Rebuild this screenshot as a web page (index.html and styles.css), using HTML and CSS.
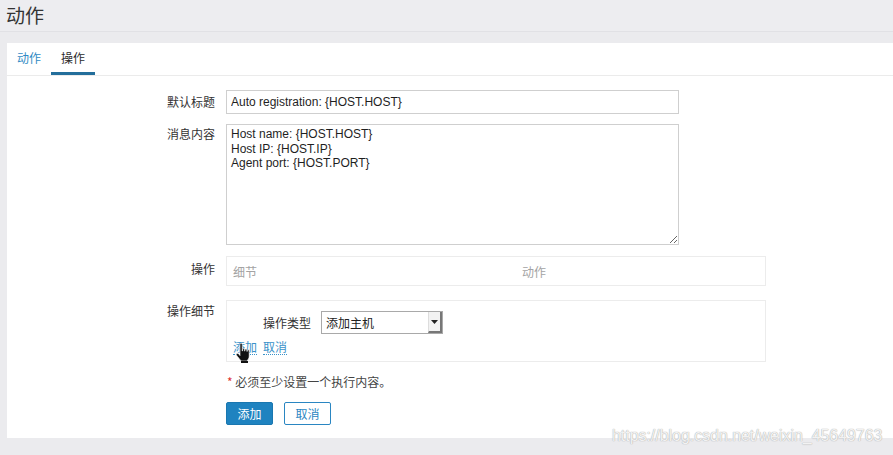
FILE: index.html
```html
<!DOCTYPE html>
<html lang="zh">
<head>
<meta charset="utf-8">
<link rel="stylesheet" href="styles.css">
</head>
<body>
<header class="page-head"><h1>动作</h1></header>
<main class="card">
  <nav class="tabs">
    <a class="tab">动作</a>
    <a class="tab active">操作</a>
  </nav>
  <form class="form">
    <label class="lbl">默认标题</label>
    <div class="ctl"><input class="text-in" type="text" value="Auto registration: {HOST.HOST}"></div>

    <label class="lbl lbl-ta">消息内容</label>
    <div class="ctl"><textarea class="ta">Host name: {HOST.HOST}
Host IP: {HOST.IP}
Agent port: {HOST.PORT}</textarea></div>

    <label class="lbl lbl-op">操作</label>
    <div class="ctl gap1">
      <div class="op-box">
        <span class="col1">细节</span>
        <span class="col2">动作</span>
      </div>
    </div>

    <label class="lbl lbl-det">操作细节</label>
    <div class="ctl gap2">
      <div class="det-box">
        <div class="det-row">
          <span class="det-lbl">操作类型</span>
          <div class="sel"><span>添加主机</span><span class="sel-btn"><svg width="7" height="4" viewBox="0 0 7 4"><path d="M0 0h7L3.5 4z" fill="#222"/></svg></span></div>
        </div>
        <div class="links">
          <a class="lnk">添加</a><a class="lnk">取消</a>
          <svg class="cursor" width="16" height="20" viewBox="0 0 16 20"><path d="M4 1.5c0-.8.5-1.3 1.1-1.3s1.1.5 1.1 1.3V8l.4-.1V6.7c0-.7.5-1.1 1-1.1s1 .4 1 1.1v1.4h.3v-1c0-.7.5-1.1 1-1.1s1 .4 1 1.1v1.3h.3v-.6c0-.6.4-1 1-1s1 .4 1 1V13c0 2.5-1.5 4.2-2.6 5H5.2c-.9-1.2-3.6-4.2-4.5-5.6-.5-.8-.3-1.6.4-1.9.6-.3 1.3 0 1.8.7L4 12.6z" fill="#111" stroke="#fff" stroke-width=".6"/><rect x="5" y="18" width="7" height="2" fill="#111"/></svg>
        </div>
      </div>
    </div>

    <span></span>
    <p class="note"><span class="req">*</span> 必须至少设置一个执行内容。</p>

    <span></span>
    <div class="btns">
      <button type="button" class="btn primary">添加</button>
      <button type="button" class="btn outline">取消</button>
    </div>
  </form>
</main>
<div class="watermark">https://blog.csdn.net/weixin_45649763</div>
</body>
</html>
```

FILE: styles.css
```css
html, body {
  margin: 0;
  padding: 0;
}
body {
  background: #ebebee;
  font-family: "Liberation Sans", "Noto Sans CJK SC", sans-serif;
  font-size: 12px;
  color: #1f2c33;
  width: 893px;
  height: 455px;
  overflow: hidden;
  position: relative;
}
.page-head {
  height: 31px;
  border-bottom: 1px solid #e1e1e5;
  background: #ededf0;
}
.page-head h1 {
  margin: 0;
  padding-left: 6px;
  font-family: "Noto Sans CJK SC", sans-serif;
  font-weight: 400;
  font-size: 19px;
  line-height: 29px;
  color: #333;
}
.card {
  margin: 11px 0 0 7px;
  background: #fff;
  height: 395px;
  box-sizing: border-box;
}
.tabs {
  display: flex;
  height: 32px;
  border-bottom: 1px solid #ebebeb;
}
.tab {
  padding: 0 10px;
  font-family: "Noto Sans CJK SC", sans-serif;
  font-size: 12px;
  line-height: 29px;
  color: #2f8ac4;
  border-bottom: 3px solid transparent;
}
.tab.active {
  color: #2b2b2b;
  border-bottom-color: #236e9b;
}
.form {
  display: grid;
  grid-template-columns: 208px 1fr;
  column-gap: 11px;
  padding-top: 14px;
}
.lbl {
  text-align: right;
  font-family: "Noto Sans CJK SC", sans-serif;
  font-size: 12px;
  color: #333;
  padding-top: 4px;
  line-height: 16px;
}
.lbl-ta { padding-top: 2px; margin-top: 10px; }
.lbl-op { padding-top: 5px; margin-top: 11px; }
.lbl-det { padding-top: 3px; margin-top: 14px; }
.ctl { display: flex; }
.text-in {
  width: 453px;
  height: 24px;
  box-sizing: border-box;
  border: 1px solid #cfcfcf;
  padding: 0 4px;
  font-family: "Liberation Sans", sans-serif;
  font-size: 12px;
  color: #1f1f1f;
  outline: none;
  margin: 0;
}
.ta {
  margin: 10px 0 0;
  width: 453px;
  height: 121px;
  box-sizing: border-box;
  border: 1px solid #cfcfcf;
  padding: 2px 4px;
  font-family: "Liberation Sans", sans-serif;
  font-size: 12px;
  line-height: 14.5px;
  color: #1f1f1f;
  resize: both;
  outline: none;
}
.gap1 { margin-top: 11px; }
.gap2 { margin-top: 14px; }
.op-box {
  width: 540px;
  height: 30px;
  box-sizing: border-box;
  border: 1px solid #ececec;
  display: flex;
  align-items: center;
  font-family: "Noto Sans CJK SC", sans-serif;
  color: #a3a3a3;
  font-size: 12px;
}
.col1 { padding-left: 6px; width: 289px; }
.det-box {
  width: 540px;
  height: 62px;
  box-sizing: border-box;
  border: 1px solid #ececec;
  padding: 10px 0 0 5px;
  font-family: "Noto Sans CJK SC", sans-serif;
}
.det-row {
  display: flex;
  align-items: center;
  gap: 10px;
  padding-left: 31px;
}
.det-lbl {
  color: #333;
  font-size: 12px;
}
.sel {
  width: 122px;
  height: 23px;
  box-sizing: border-box;
  border: 1px solid #a9a9a9;
  display: flex;
  align-items: center;
  justify-content: space-between;
  padding-left: 4px;
  color: #222;
  background: #fff;
}
.sel-btn {
  width: 14px;
  height: 21px;
  box-sizing: border-box;
  border-left: 1px solid #ddd;
  border-right: 2px solid #777;
  border-bottom: 2px solid #777;
  background: #f2f2f2;
  display: flex;
  align-items: center;
  justify-content: center;
}
.links {
  position: relative;
  display: flex;
  gap: 6px;
  margin-top: 5px;
  padding-left: 1px;
}
.lnk {
  color: #3a92c9;
  font-size: 12px;
  line-height: 15px;
  border-bottom: 1px dotted #3a92c9;
}
.cursor {
  position: absolute;
  left: 4px;
  top: 4px;
}
.note {
  margin: 12px 0 0;
  font-family: "Noto Sans CJK SC", sans-serif;
  font-size: 12px;
  color: #444;
  line-height: 16px;
}
.req { color: #d33; margin-left: 1px; }
.btns {
  display: flex;
  gap: 11px;
  margin-top: 12px;
}
.btn {
  width: 47px;
  height: 23px;
  box-sizing: border-box;
  font-family: "Noto Sans CJK SC", sans-serif;
  font-size: 12px;
  padding: 0;
  border-radius: 2px;
  margin: 0;
}
.btn.primary {
  background: #1f83c0;
  border: 1px solid #1a77b0;
  color: #fff;
}
.btn.outline {
  background: #fff;
  border: 1px solid #2a86c2;
  color: #2a86c2;
}
.watermark {
  position: absolute;
  left: 612px;
  top: 427px;
  font-family: "Liberation Sans", sans-serif;
  font-size: 15.9px;
  color: rgba(255, 255, 255, 0.85);
  text-shadow: 0 0 1px #aaa, 0 0 1px #bbb;
  white-space: nowrap;
}
```
